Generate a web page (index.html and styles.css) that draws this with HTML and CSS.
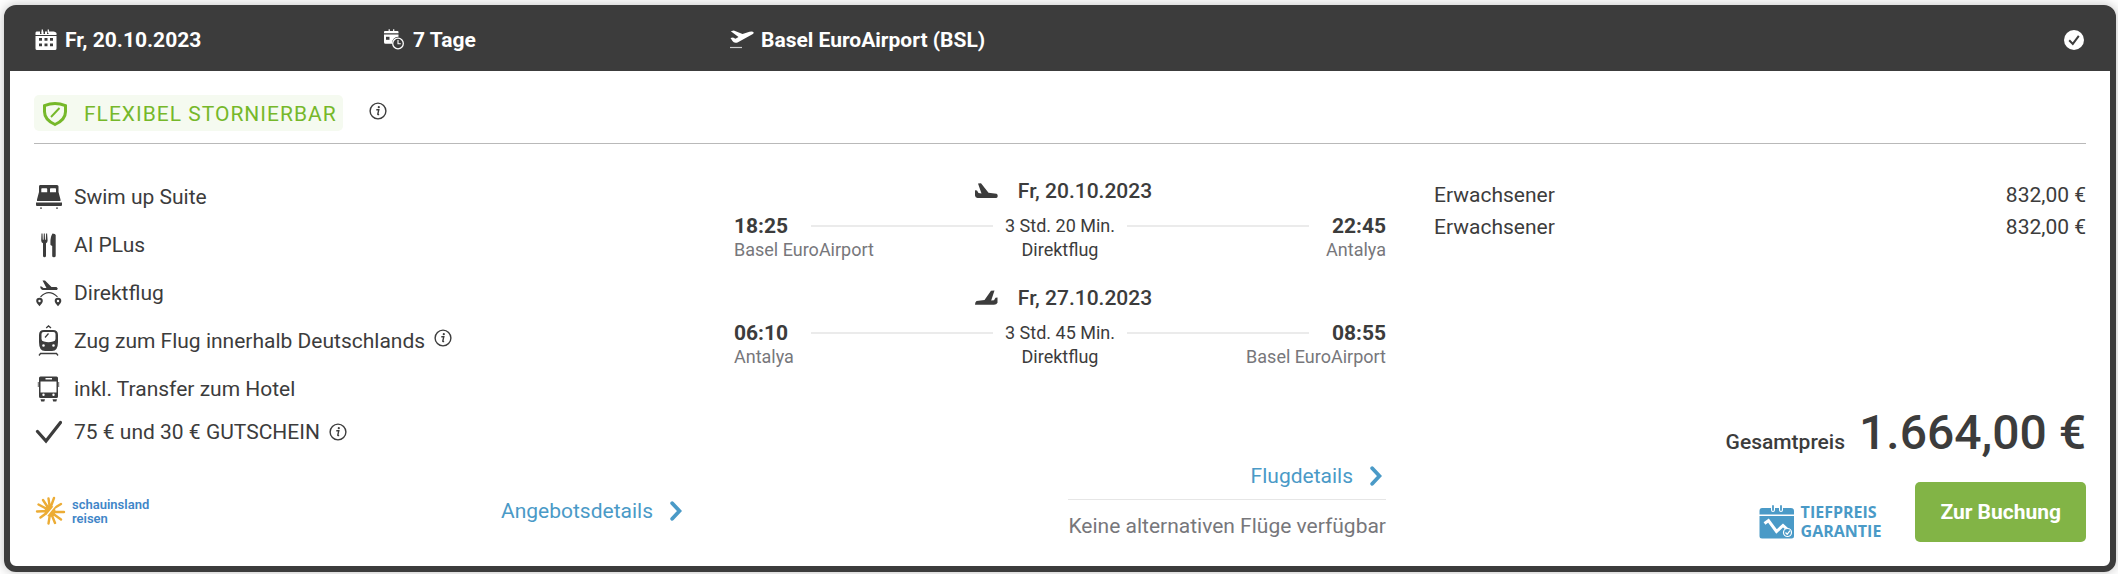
FILE: index.html
```html
<!DOCTYPE html>
<html lang="de">
<head>
<meta charset="utf-8">
<title>Angebot</title>
<link rel="stylesheet" href="styles.css">
</head>
<body>
<svg class="defs" aria-hidden="true">
  <symbol id="info" viewBox="0 0 18 18">
    <circle cx="9" cy="9" r="7.9" fill="none" stroke="currentColor" stroke-width="1.4"/>
    <circle cx="9.8" cy="5.2" r="1.1" fill="currentColor"/>
    <path d="M7.3 7.7h2.5l-1 4.5q0 .6 1.3.1" fill="none" stroke="currentColor" stroke-width="1.4"/>
  </symbol>
  <symbol id="chevron" viewBox="0 0 12 20">
    <path d="M2.200 2.200L9.500 10l-7.300 7.800" fill="none" stroke="currentColor" stroke-width="3.800" stroke-linecap="round" stroke-linejoin="miter"/>
  </symbol>
</svg>
<article class="card">
  <header class="card-header">
    <div class="fact">
      <svg class="icon" viewBox="0 0 24 22"><path fill="#fff" d="M2.500 2.500H6V5h1.500V2.500h2V5H11V2.500h2V5h1.500V2.500h5Q21.500 2.500 22.500 4v2h-21V4q0-1.500 1-1.500z"/><path stroke="#fff" stroke-width="1.300" d="M8.300.5v3.500M14.300.5v3.500"/><path fill="#fff" fill-rule="evenodd" d="M1.500 7h21v12.500q0 1.500-1.500 1.500H3q-1.500 0-1.500-1.500zM5 9v2.800h3V9zm5.500 0v2.800h3V9zm5.500 0v2.800h3V9zM5 14.500v2.800h3v-2.800zm5.500 0v2.800h3v-2.800zm5.500 0v2.800h3v-2.800z"/></svg>
      <span>Fr, 20.10.2023</span>
    </div>
    <div class="fact">
      <svg class="icon" viewBox="0 0 24 22"><path fill="#fff" d="M3 2h12.500q1 0 1 1v1.300H2V3q0-1 1-1zM2 5.500h14.500v2.200a6.300 6.300 0 0 0-6.500 7H3.500Q2 14.700 2 13.200z"/><path stroke="#fff" stroke-width="1.200" d="M7.200.3V3M11.700.3V3"/><path fill="#3c3c3c" d="M4 7.800h3.500v3H4z"/><circle cx="16" cy="14.500" r="5.300" fill="none" stroke="#fff" stroke-width="1.300"/><path fill="none" stroke="#fff" stroke-width="1.100" d="M16 11v3.700h2.800"/></svg>
      <span>7 Tage</span>
    </div>
    <div class="fact">
      <svg class="icon" viewBox="0 0 24 22"><path fill="#fff" d="M.8 2.300l3-.8L12.500 5l7-2.200q3-.8 4 .4.700 1.200-1.500 2.300L7.500 13.500q-3.700 1-5-1.500L.5 8.900l2.500-.4 2.500 1.300L8.500 8z"/><path stroke="#ccc" stroke-width="1.200" d="M0 18.500h12"/></svg>
      <span>Basel EuroAirport (BSL)</span>
    </div>
    <svg class="selected" viewBox="0 0 20 20" role="img" aria-label="Ausgewählt"><circle cx="10" cy="10" r="10" fill="#fff"/><path d="M5.200 10.200l3.600 3.700 6-8" fill="none" stroke="#3c3c3c" stroke-width="2"/></svg>
  </header>

  <div class="card-body">
    <div class="flex-row">
      <span class="flex-badge">
        <svg class="shield" viewBox="0 0 26 26"><path d="M13 2.500q-5 0-10.500 2.200v6q0 8 10.500 12.800 10.500-4.800 10.500-12.800v-6Q18 2.500 13 2.500z" fill="none" stroke="currentColor" stroke-width="3"/><path d="M9 16l8.500-9" stroke="currentColor" stroke-width="1.900"/></svg>
        <span>FLEXIBEL STORNIERBAR</span>
      </span>
      <button class="info" type="button" aria-label="Info Stornierung"><svg><use href="#info"/></svg></button>
    </div>

    <div class="columns">
      <section class="col">
        <ul class="features">
          <li>
            <svg class="feature-icon" viewBox="0 0 28 28"><path fill-rule="evenodd" d="M6 2h17q1.500 0 1.500 1.500V9l2 7.500v1.500H3v-1.500L5 9V3.500Q5 2 6 2zM7.300 6v3.200h5.900V6q0-.8-.8-.8H8.100q-.8 0-.8.800zM16 6v3.200h6V6q0-.8-.8-.8h-4.400q-.8 0-.8.800z"/><path d="M2 19.500h26v2.500q0 1-1 1H3q-1 0-1-1zM6 24.500h2l-.5 1.500h-1zM22 24.500h2l-.5 1.500h-1z"/></svg>
            <span>Swim up Suite</span>
          </li>
          <li>
            <svg class="feature-icon" viewBox="0 0 28 28"><path d="M7.500 2.500h1l.3 6.300h.8l.2-6.300h1l.2 6.300h.8l.3-6.300h1l.5 7q0 2-1.600 2.800v12.500q0 1.500-1.500 1.500T9 24.800V12.300Q7.200 11.500 7.200 9.500zM18.500 2.500q3 0 3.200 1.500v20.800q0 1.500-1.800 1.500t-1.700-1.500V15l-1.700-1q-.5-8 2-11.500z"/></svg>
            <span>AI PLus</span>
          </li>
          <li>
            <svg class="feature-icon" viewBox="0 0 28 28"><path d="M8.500 1.500h2.500l6.500 6.500h5l1.300 1.600-.8 1.400H8.500Q6.500 10.500 6 7.500h1.500l2 1.500h3z"/><path d="M6.500 18q8-8.500 17-.2" fill="none" stroke="currentColor" stroke-width="1.100"/><path fill-rule="evenodd" d="M5.500 18.800a3.300 3.300 0 0 1 3.300 3.300q0 1.800-3.300 5.200-3.300-3.400-3.300-5.200a3.300 3.300 0 0 1 3.300-3.300zm0 2a1.200 1.200 0 1 0 0 2.400 1.200 1.200 0 0 0 0-2.400zM24 18.800a3.300 3.300 0 0 1 3.300 3.300q0 1.800-3.300 5.200-3.300-3.400-3.300-5.200a3.300 3.300 0 0 1 3.300-3.300zm0 2a1.200 1.200 0 1 0 0 2.400 1.200 1.200 0 0 0 0-2.400z"/></svg>
            <span>Direktflug</span>
          </li>
          <li>
            <svg class="feature-icon tall" viewBox="0 0 28 32"><path d="M12.200 3L14.500.9 17 3" fill="none" stroke="currentColor" stroke-width="1.300"/><path fill-rule="evenodd" d="M10 5h9q5 0 5 5v7q0 9-6 9h-7q-6 0-6-9v-7q0-5 5-5zM9.500 7Q7.500 7 7.500 9v5q0 2 2.500 2.600 4.500 1.100 9 0 2.500-.6 2.500-2.600V9q0-2-2-2zM9.500 19.200a1.300 1.300 0 1 0 0 2.600 1.300 1.300 0 0 0 0-2.600zm10 0a1.300 1.300 0 1 0 0 2.600 1.300 1.300 0 0 0 0-2.600z"/><path d="M11 12.500l3.500-4M5 30.500l1.500-2h16l1.500 2" fill="none" stroke="currentColor" stroke-width="1.300"/></svg>
            <span>Zug zum Flug innerhalb Deutschlands</span>
            <button class="info raised" type="button" aria-label="Info Zug zum Flug"><svg><use href="#info"/></svg></button>
          </li>
          <li>
            <svg class="feature-icon" viewBox="0 0 28 28"><path fill-rule="evenodd" d="M6.500 1.500h16q1.500 0 1.500 1.500v18.500q0 1.500-1.500 1.500h-16Q5 23 5 21.500V3q0-1.500 1.500-1.500zm5 1.500v1.500h6.500V3zM6.500 6.500v11h16v-11zm3 12.100a1.200 1.200 0 1 0 0 2.400 1.200 1.200 0 0 0 0-2.400zm10 0a1.200 1.200 0 1 0 0 2.400 1.200 1.200 0 0 0 0-2.400z"/><path d="M6.500 24.300h4.500l-.7 2.200H7.200zM18.500 24.300H23l-.7 2.200h-3.100z"/><path d="M4.300 7v5M24.700 7v5" stroke="currentColor" stroke-width=".8"/></svg>
            <span>inkl. Transfer zum Hotel</span>
          </li>
          <li>
            <svg class="feature-icon" viewBox="0 0 28 28"><path d="M3.500 13.500l8.500 9.500L26.500 4.500" fill="none" stroke="currentColor" stroke-width="3.200" stroke-linecap="round"/></svg>
            <span>75 € und 30 € GUTSCHEIN</span>
            <button class="info" type="button" aria-label="Info Gutschein"><svg><use href="#info"/></svg></button>
          </li>
        </ul>
        <div class="provider-row">
          <div class="provider">
            <svg class="sun" viewBox="0 0 32 30"><g stroke="#ecac35" stroke-linecap="round" stroke-width="2.400"><path d="M15 14L4.500 8.500M14 15L3 15.500M14 16L6.500 21.500M15 13L9 4M16 13L14.500 2.500M16 13L20 2M17 14L27 8M18 16L30 16M18 17L27 23.500M17 17L21 27M16 18L14.500 27.500"/></g><circle cx="16" cy="15" r="5.500" fill="#ecac35"/><path d="M11.500 21L21.500 9" stroke="#fff" stroke-width="1.200"/></svg>
            <div class="provider-name"><span>schauinsland</span><span>reisen</span></div>
          </div>
          <a class="more" href="#angebot">Angebotsdetails<svg><use href="#chevron"/></svg></a>
        </div>
      </section>

      <section class="col">
        <div class="flights">
          <div class="flight">
            <div class="flight-date">
              <svg class="plane" viewBox="0 0 24 18"><path d="M4 1.500l3-.2 7.500 9.400 8 1q1.700 1 1 3.300-.3 1-1.500 1H3.500Q1.200 15.800 1 13.500V8.200l2 .2 1.500 2.700 3 .3z"/></svg>
              <span>Fr, 20.10.2023</span>
            </div>
            <div class="route">
              <strong class="time">18:25</strong><span class="line"></span><span class="duration">3 Std. 20 Min.</span><span class="line"></span><strong class="time end">22:45</strong>
            </div>
            <div class="places"><span>Basel EuroAirport</span><span class="stops">Direktflug</span><span class="end">Antalya</span></div>
          </div>
          <div class="flight">
            <div class="flight-date">
              <svg class="plane" viewBox="0 0 24 18"><path d="M20.500 1.500l-3.500.2-6.500 9.400-8 1q-1.500 1-1.500 3.700H20q2.500 0 3.500-2V8.500l-2 .2-1.500 2.500-2.800.3z"/></svg>
              <span>Fr, 27.10.2023</span>
            </div>
            <div class="route">
              <strong class="time">06:10</strong><span class="line"></span><span class="duration">3 Std. 45 Min.</span><span class="line"></span><strong class="time end">08:55</strong>
            </div>
            <div class="places"><span>Antalya</span><span class="stops">Direktflug</span><span class="end">Basel EuroAirport</span></div>
          </div>
        </div>
        <div class="alternatives">
          <a class="more" href="#flug">Flugdetails<svg><use href="#chevron"/></svg></a>
          <p class="note">Keine alternativen Flüge verfügbar</p>
        </div>
      </section>

      <section class="col">
        <dl class="prices">
          <div><dt>Erwachsener</dt><dd>832,00 €</dd></div>
          <div><dt>Erwachsener</dt><dd>832,00 €</dd></div>
        </dl>
        <div class="total"><span>Gesamtpreis</span><strong>1.664,00 €</strong></div>
        <div class="actions">
          <div class="guarantee">
            <svg viewBox="0 0 36 34"><path fill="currentColor" d="M3 3h9v2q0 2 2 2t2-2V3h4v2q0 2 2 2t2-2V3h8q3 0 3 3v3.500H.5V6q0-3 2.500-3zM.5 11h34.500v20q0 2.500-2.500 2.500H3Q.5 33.500.5 31z"/><path stroke="currentColor" stroke-width="1.800" stroke-linecap="round" d="M14 1v4M22 1v4"/><path d="M5.500 18.500l4-3 8 11 6.500-6 4.500 4" fill="none" stroke="#fff" stroke-width="3"/><circle cx="28.500" cy="27.500" r="4" fill="currentColor" stroke="#fff" stroke-width="1.200"/><path d="M26.500 27.500l1.700 1.800 2.800-3.700" fill="none" stroke="#fff" stroke-width="1.300"/></svg>
            <span>TIEFPREIS<br>GARANTIE</span>
          </div>
          <button class="book" type="button">Zur Buchung</button>
        </div>
      </section>
    </div>
  </div>
</article>
</body>
</html>
```
FILE: styles.css
```css
* { box-sizing: border-box; }

body {
  margin: 0;
  padding: 5px 2px 2px 4px;
  background: #fff;
  color: #3c3c3c;
  font: 400 21px/24px Roboto, "Open Sans", sans-serif;
}

.defs { display: none; }
svg { flex: none; }

.card {
  border: 6px solid #3c3c3c;
  border-radius: 12px;
  background: #fff;
  box-shadow: 0 0 12px rgba(0, 0, 0, .25);
}

/* Header bar */
.card-header {
  display: grid;
  grid-template-columns: repeat(6, 1fr);
  column-gap: 36px;
  align-items: center;
  height: 60px;
  padding: 0 24px 2px;
  background: #3c3c3c;
  color: #fff;
  font-weight: 700;
  white-space: nowrap;
}
.fact { display: flex; align-items: center; gap: 7px; }
.icon { width: 24px; height: 22px; }
.selected { grid-column: 6; justify-self: end; width: 20px; height: 20px; margin-right: 2px; }

.card-body { padding: 24px; }

/* Cancellation badge */
.flex-row {
  display: flex;
  align-items: center;
  gap: 26px;
  padding-bottom: 12px;
  border-bottom: 1px solid #b9b9b9;
}
.flex-badge {
  display: flex;
  align-items: center;
  gap: 16px;
  height: 36px;
  padding: 1px 6px 0 8px;
  border-radius: 5px;
  background: #f5faf0;
  color: #76b82a;
  letter-spacing: 1px;
}
.shield { width: 26px; height: 26px; }

.info {
  display: flex;
  padding: 0;
  border: 0;
  background: none;
  color: inherit;
}
.info svg { width: 18px; height: 18px; }
.flex-row .info { padding-bottom: 4px; }
.raised { padding-bottom: 6px; }

/* Three equal columns */
.columns {
  display: grid;
  grid-template-columns: repeat(3, 1fr);
  column-gap: 48px;
}
.col { display: flex; flex-direction: column; }

.features { margin: 0; padding: 29px 0 0; list-style: none; }
.features li { display: flex; align-items: center; gap: 9px; height: 48px; }
.features li:last-child { height: 38px; }
.feature-icon { width: 28px; height: 28px; margin-right: 3px; fill: currentColor; }
.feature-icon.tall { height: 32px; }

.provider-row {
  display: flex;
  justify-content: space-between;
  align-items: center;
  margin-top: 45px;
  padding: 0 0 16px;
}
.provider { display: flex; align-items: center; gap: 6px; }
.sun { width: 32px; height: 30px; }
.provider-name {
  display: grid;
  row-gap: 1px;
  color: #3f86c8;
  font: 600 13px/13px Roboto, "Open Sans", sans-serif;
}

.more {
  display: flex;
  align-items: center;
  justify-content: flex-end;
  gap: 17px;
  padding-right: 4px;
  color: #4a9ac7;
  text-decoration: none;
}
.more svg { width: 12px; height: 20px; }

/* Flights */
.flights { display: grid; row-gap: 21px; padding-top: 32px; }
.flight-date {
  display: flex;
  justify-content: center;
  align-items: center;
  gap: 20px;
  margin-bottom: 8px;
  padding-left: 6px;
  font-weight: 500;
  line-height: 30px;
}
.plane { width: 24px; height: 18px; fill: currentColor; }
.route { display: flex; align-items: center; gap: 12px; }
.time { width: 65px; font-weight: 700; }
.line { flex: 1; height: 2px; background: #ebebeb; }
.duration { font-size: 18px; }
.places {
  display: grid;
  grid-template-columns: 1fr auto 1fr;
  color: #77777b;
  font-size: 18px;
}
.stops { color: #3c3c3c; }
.end { text-align: right; }

.alternatives { align-self: flex-end; margin-top: auto; padding-bottom: 4px; }
.alternatives .more { padding-bottom: 11px; border-bottom: 1px solid #e6e6e6; }
.note { margin: 0; padding-top: 14px; color: #77777b; }

/* Prices */
.prices { margin: 0; padding-top: 35px; line-height: 32px; }
.prices div { display: flex; justify-content: space-between; }
.prices dd { margin: 0; }
.total {
  display: flex;
  justify-content: flex-end;
  align-items: baseline;
  gap: 14px;
  margin-top: auto;
  font-weight: 500;
}
.total strong { font-size: 48px; font-weight: 500; line-height: 56px; }
.actions {
  display: flex;
  justify-content: flex-end;
  align-items: flex-end;
  gap: 34px;
  margin-top: 21px;
}
.guarantee {
  display: flex;
  align-items: center;
  gap: 6px;
  padding-bottom: 1px;
  color: #4a9ac7;
  font: 700 16px/19px "Open Sans", "Noto Sans", sans-serif;
}
.guarantee svg { width: 36px; height: 34px; }
.book {
  height: 60px;
  padding: 0 25px;
  border: 0;
  border-radius: 5px;
  background: #82b446;
  color: #fff;
  font: 700 21px/24px Roboto, sans-serif;
}
```
